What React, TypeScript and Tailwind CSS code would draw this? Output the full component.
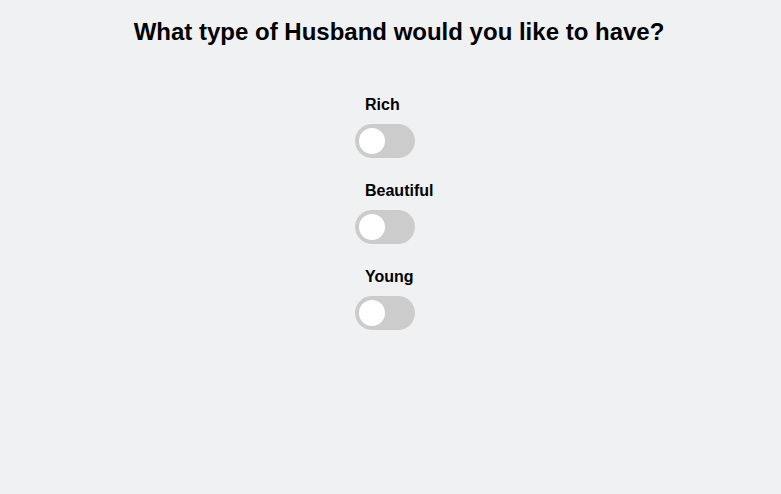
import React, { useState } from "react";

function Toggle({ label }: { label: string }) {
  const [on, setOn] = useState(false);
  return (
    <div className="flex flex-col items-start">
      <span className="ml-[10px] text-base leading-6 font-bold text-black">{label}</span>
      <button
        type="button"
        onClick={() => setOn(!on)}
        className={`mt-[7px] relative w-[60px] h-[34px] rounded-full ${on ? "bg-[#2196f3]" : "bg-[#cccccc]"}`}
      >
        <span
          className={`absolute top-[4px] w-[26px] h-[26px] rounded-full bg-white ${on ? "left-[30px]" : "left-[4px]"}`}
        />
      </button>
    </div>
  );
}

export default function App() {
  return (
    <div
      className="min-h-[494px] w-full bg-[#f0f1f3]"
      style={{ fontFamily: '"Liberation Sans", Arial, sans-serif' }}
    >
      <h1 className="pt-[18px] pl-[17px] text-center text-[24px] leading-[28px] font-bold text-black">
        What type of Husband would you like to have?
      </h1>
      <div className="mx-auto mt-[47px] w-[71px] flex flex-col gap-[21px]">
        <Toggle label="Rich" />
        <Toggle label="Beautiful" />
        <Toggle label="Young" />
      </div>
    </div>
  );
}
